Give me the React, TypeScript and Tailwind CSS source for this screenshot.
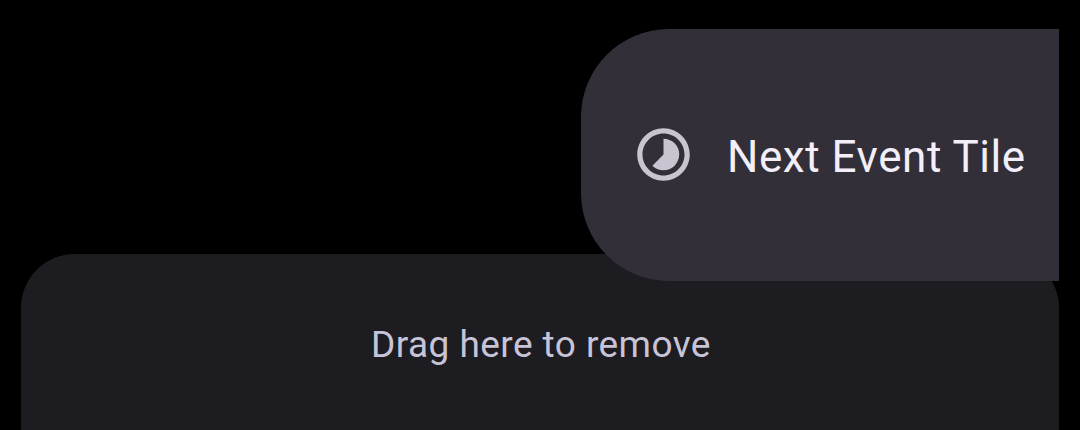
function TimelapseIcon() {
  return (
    <svg viewBox="0 0 24 24" className="mb-px size-[63px] shrink-0 fill-[#c9c5d0]" aria-hidden="true">
      <path d="M16.24 7.76C15.07 6.59 13.54 6 12 6v6l-4.24 4.24c2.34 2.34 6.14 2.34 8.49 0 2.34-2.34 2.34-6.14-.01-8.48zM12 2C6.48 2 2 6.48 2 12s4.48 10 10 10 10-4.48 10-10S17.52 2 12 2zm0 18c-4.42 0-8-3.58-8-8s3.58-8 8-8 8 3.58 8 8-3.58 8-8 8z" />
    </svg>
  );
}

export default function App() {
  return (
    <div className="flex h-[430px] w-[1080px] flex-col overflow-hidden bg-black px-[21px] pt-[29px] font-[Roboto,sans-serif]">
      <div className="z-10 flex h-[252px] w-[478px] shrink-0 items-center self-end overflow-hidden rounded-l-[88px] bg-[#322f39] pl-[51px]">
        <TimelapseIcon />
        <span className="ml-8 pt-[3px] text-[44px] leading-none tracking-[0.55px] whitespace-nowrap text-[#f2effa]">
          Next Event Tile
        </span>
      </div>
      <div className="-mt-[27px] flex flex-1 justify-center rounded-t-[54px] bg-[#1d1c21] pt-[72px]">
        <span className="pl-[2px] text-[37px] leading-none tracking-[0.43px] whitespace-nowrap text-[#c8c4d7]">
          Drag here to remove
        </span>
      </div>
    </div>
  );
}
